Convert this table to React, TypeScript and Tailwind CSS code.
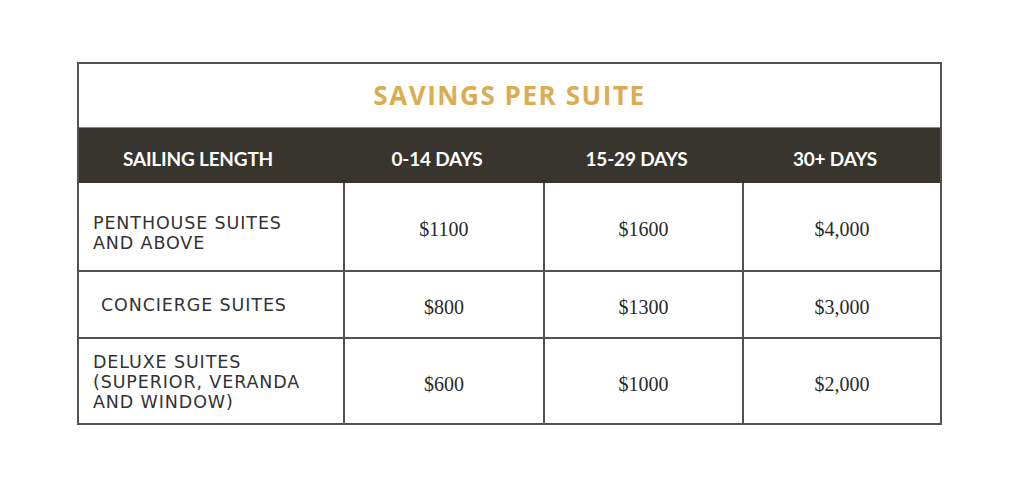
const rows = [
  { label: ["PENTHOUSE SUITES", "AND ABOVE"], values: ["$1100", "$1600", "$4,000"], h: "h-[87px]", pad: "pl-[14px] pt-[12px]" },
  { label: ["CONCIERGE SUITES"], values: ["$800", "$1300", "$3,000"], h: "h-[67px]", pad: "pl-[22px]" },
  { label: ["DELUXE SUITES", "(SUPERIOR, VERANDA", "AND WINDOW)"], values: ["$600", "$1000", "$2,000"], h: "h-[86px]", pad: "pl-[14px] pt-[2px]" },
];

const heads = ["SAILING LENGTH", "0-14 DAYS", "15-29 DAYS", "30+ DAYS"];

export default function App() {
  return (
    <main className="min-h-[496px] w-[1024px] bg-white pt-[62px] pl-[77px]">
      <div className="w-[865px] border-2 border-[#55524e]">
        <div className="h-[64px] flex items-center justify-center border-b border-[#8a8680]">
          <h1 className="text-[26px] font-bold tracking-[0.06em] text-[#dcab52] font-['Open_Sans','Lato',sans-serif]">
            SAVINGS PER SUITE
          </h1>
        </div>
        <div className="grid grid-cols-[264px_200px_199px_198px] h-[55px] bg-[#38342e]">
          {heads.map((h, i) => (
            <div
              key={h}
              className={`flex items-center justify-center pt-[8px] text-[19px] font-bold tracking-[-0.01em] text-white font-['Lato','Open_Sans',sans-serif] ${i === 0 ? "pr-[26px]" : "pr-[12px]"}`}
            >
              {h}
            </div>
          ))}
        </div>
        {rows.map((r, ri) => (
          <div
            key={ri}
            className={`grid grid-cols-[264px_200px_199px_198px] ${r.h} ${ri > 0 ? "border-t-2 border-[#55524e]" : ""}`}
          >
            <div
              className={`flex flex-col justify-center ${r.pad} text-[17.5px] leading-[20px] tracking-[0.05em] text-[#333] font-['DejaVu_Sans','Open_Sans',sans-serif]`}
            >
              {r.label.map((l) => (
                <span key={l} className="whitespace-nowrap">{l}</span>
              ))}
            </div>
            {r.values.map((v, vi) => (
              <div
                key={vi}
                className="border-l-2 border-[#55524e] flex items-center justify-center pt-[5px] text-[20px] text-[#2a2a2a] font-['Liberation_Serif','Times_New_Roman',serif]"
              >
                {v}
              </div>
            ))}
          </div>
        ))}
      </div>
    </main>
  );
}
